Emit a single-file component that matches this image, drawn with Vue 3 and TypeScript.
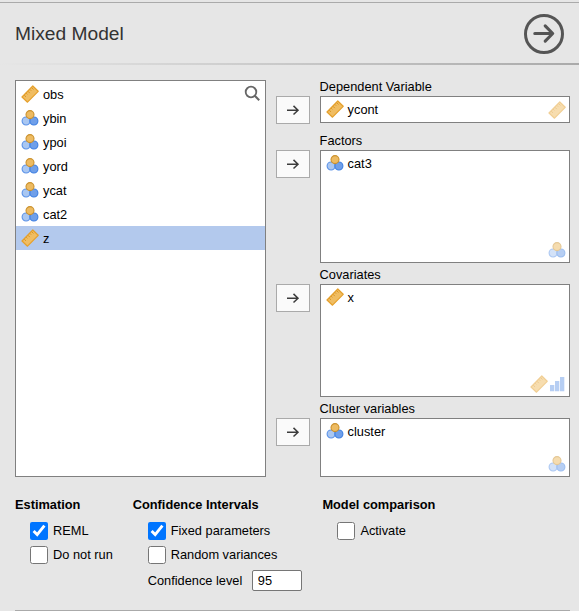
<script setup lang="ts">
import { h, ref, type FunctionalComponent } from 'vue'

type Kind = 'continuous' | 'nominal' | 'ordinal'
interface Variable { name: string; kind: Kind }
interface Target { label: string; size: string; items: Variable[]; accepts: Kind[] }

const variables: Variable[] = [
  { name: 'obs', kind: 'continuous' },
  { name: 'ybin', kind: 'nominal' },
  { name: 'ypoi', kind: 'nominal' },
  { name: 'yord', kind: 'nominal' },
  { name: 'ycat', kind: 'nominal' },
  { name: 'cat2', kind: 'nominal' },
  { name: 'z', kind: 'continuous' },
]
const selected = ref('z')

const targets: Target[] = [
  { label: 'Dependent Variable', size: 'single', items: [{ name: 'ycont', kind: 'continuous' }], accepts: ['continuous'] },
  { label: 'Factors', size: 'large', items: [{ name: 'cat3', kind: 'nominal' }], accepts: ['nominal'] },
  { label: 'Covariates', size: 'large', items: [{ name: 'x', kind: 'continuous' }], accepts: ['continuous', 'ordinal'] },
  { label: 'Cluster variables', size: 'small', items: [{ name: 'cluster', kind: 'nominal' }], accepts: ['nominal'] },
]

const reml = ref(true)
const doNotRun = ref(false)
const fixedParams = ref(true)
const randomVariances = ref(false)
const activate = ref(false)
const level = ref('95')

const circle = (cx: number, cy: number, fill: string, stroke: string) =>
  h('circle', { cx, cy, r: 4, fill, stroke, 'stroke-width': 1.1 })

const VarIcon: FunctionalComponent<{ kind: Kind }> = ({ kind }) => {
  const shapes = {
    continuous: () => [
      h('path', { d: 'M11.8 1 17.2 6.3 6.5 17.2 1 12Z', fill: '#f0bd62', stroke: '#e5a02c', 'stroke-width': 1.2, 'stroke-linejoin': 'round' }),
      h('path', { d: 'M3.2 10.1 5 11.9M5.2 8.2 6.4 9.4M7 6.3 8.8 8.1M9 4.5 10.2 5.7M10.7 2.7 12.5 4.5', fill: 'none', stroke: '#d99624', 'stroke-width': 1 }),
    ],
    nominal: () => [
      circle(5.1, 12, '#a9c7f2', '#5c93e8'),
      circle(12.9, 12, '#6f9fe9', '#3f80e2'),
      circle(9, 5.6, '#edbb62', '#cb922f'),
    ],
    ordinal: () => [
      h('path', { d: 'M2 10h4.3v6.3H2ZM7 6h4.3v10.3H7ZM12 2h4.3v14.3H12Z', fill: '#6f9fe9' }),
    ],
  }
  return h('svg', { class: 'var-icon', width: 18, height: 18, viewBox: '0 0 18 18', 'aria-hidden': 'true' }, shapes[kind]())
}
VarIcon.props = ['kind']
</script>

<template>
  <main class="panel">
    <header class="header">
      <h1>Mixed Model</h1>
      <button class="close" type="button" aria-label="Hide options">
        <svg width="40" height="40" viewBox="0 0 40 40" fill="none" stroke="#555">
          <circle cx="20" cy="20" r="18.5" stroke-width="3" />
          <path d="M10.8 19.5H28.2M21.2 11.9l7.5 7.6-7.5 7.6" stroke-width="3.1" stroke-linecap="round" stroke-linejoin="round" />
        </svg>
      </button>
    </header>
    <div class="rule"></div>

    <section class="assign">
      <div class="supplier">
        <ul>
          <li v-for="v in variables" :key="v.name" class="item" :class="{ selected: v.name === selected }" @click="selected = v.name">
            <VarIcon :kind="v.kind" /><span>{{ v.name }}</span>
          </li>
        </ul>
        <svg class="search" width="18" height="18" viewBox="0 0 18 18" fill="none" stroke="#666">
          <circle cx="8" cy="8" r="5.3" stroke-width="1.8" />
          <path d="m11.8 11.8 4.4 4.4" stroke-width="2.1" />
        </svg>
      </div>

      <div class="targets">
        <div v-for="t in targets" :key="t.label" class="target">
          <button class="move" type="button" :aria-label="t.label">
            <svg width="14" height="12" viewBox="0 0 14 12" fill="none" stroke="#3c3c3c" stroke-width="1.5">
              <path d="M1 6.2h11M7.5 1.9 12 6.2l-4.5 4.3" />
            </svg>
          </button>
          <div class="field">
            <div class="label">{{ t.label }}</div>
            <div class="box" :class="t.size">
              <div v-for="v in t.items" :key="v.name" class="item">
                <VarIcon :kind="v.kind" /><span>{{ v.name }}</span>
              </div>
              <div class="accepts"><VarIcon v-for="k in t.accepts" :key="k" :kind="k" /></div>
            </div>
          </div>
        </div>
      </div>
    </section>

    <section class="options">
      <div class="group estimation">
        <h2>Estimation</h2>
        <label><input v-model="reml" type="checkbox">REML</label>
        <label><input v-model="doNotRun" type="checkbox">Do not run</label>
      </div>
      <div class="group intervals">
        <h2>Confidence Intervals</h2>
        <label><input v-model="fixedParams" type="checkbox">Fixed parameters</label>
        <label><input v-model="randomVariances" type="checkbox">Random variances</label>
        <label class="level">Confidence level<input v-model="level" type="text"></label>
      </div>
      <div class="group comparison">
        <h2>Model comparison</h2>
        <label><input v-model="activate" type="checkbox">Activate</label>
      </div>
    </section>
    <div class="divider"></div>
  </main>
</template>

<style>
body { background: #e6e6e6; overflow: hidden; }
</style>

<style scoped>
.panel {
  box-sizing: border-box;
  width: 579px;
  height: 611px;
  padding-top: 2px;
  overflow: hidden;
  background: #e6e6e6;
  color: #000;
  font: 12.8px/16px "Liberation Sans", Arial, sans-serif;
}
.header {
  display: flex;
  justify-content: space-between;
  height: 60px;
  padding: 0 15px;
  border-top: 1px solid #aaa;
}
h1 { margin: 20px 0 0; color: #333; font-size: 19.2px; font-weight: 400; line-height: 22px; }
.close { width: 40px; height: 40px; margin-top: 11px; padding: 0; border: 0; background: none; }
svg { display: block; flex: none; }
.rule { height: 2px; background: linear-gradient(to right, #e6e6e6, #aaa); }
.assign { display: flex; gap: 10px; padding: 15px 9px 0 15px; }
.supplier {
  display: flex;
  box-sizing: border-box;
  position: relative;
  width: 251px;
  height: 397px;
  padding-top: 1px;
  border: 1px solid #808080;
  background: #fff;
}
ul { flex: 1; margin: 0; padding: 0; list-style: none; }
.item { display: flex; align-items: center; gap: 4px; height: 24px; padding-left: 5px; }
.item span { padding-top: 1px; }
.item.selected { background: #b3c9ed; }
.search { position: absolute; top: 3px; right: 4px; }
.targets { display: flex; flex-direction: column; }
.target { display: flex; gap: 9.6px; }
.target + .target { margin-top: 5px; }
.target:nth-child(2) { margin-top: 10px; }
.move {
  display: flex;
  align-items: center;
  justify-content: center;
  box-sizing: border-box;
  width: 34px;
  height: 28px;
  margin-top: 16px;
  padding: 0;
  border: 1px solid #aaa;
  background: #fafafa;
}
.label { height: 16px; line-height: 14px; }
.box {
  display: flex;
  box-sizing: border-box;
  position: relative;
  width: 250px;
  border: 1px solid #808080;
  background: #fff;
}
.single { height: 27px; }
.large { height: 113px; }
.small { height: 59px; }
.accepts { display: flex; position: absolute; right: 3px; bottom: 3px; opacity: .5; }
.options { display: flex; box-sizing: border-box; padding: 20px 15px 0; height: 133px; }
.group { display: flex; flex-direction: column; align-items: flex-start; }
.estimation { width: 117.7px; }
.intervals { width: 189.7px; }
h2 { margin: 0 0 6px; font-size: 12.8px; font-weight: 700; line-height: 16px; }
.group label { display: flex; align-items: center; height: 24px; padding-left: 15px; }
.group input[type="checkbox"] { width: 18px; height: 18px; margin: 0 5px 0 0; }
.group label.level { height: 21px; margin-top: 3px; }
.level input {
  box-sizing: border-box;
  width: 50px;
  height: 21px;
  margin-left: 9.5px;
  padding: 0 5px;
  border: 1px solid #767676;
  border-radius: 2px;
  background: #fff;
  font: inherit;
}
.divider { height: 1px; margin: 0 9px 0 15px; background: #aaa; }
</style>
